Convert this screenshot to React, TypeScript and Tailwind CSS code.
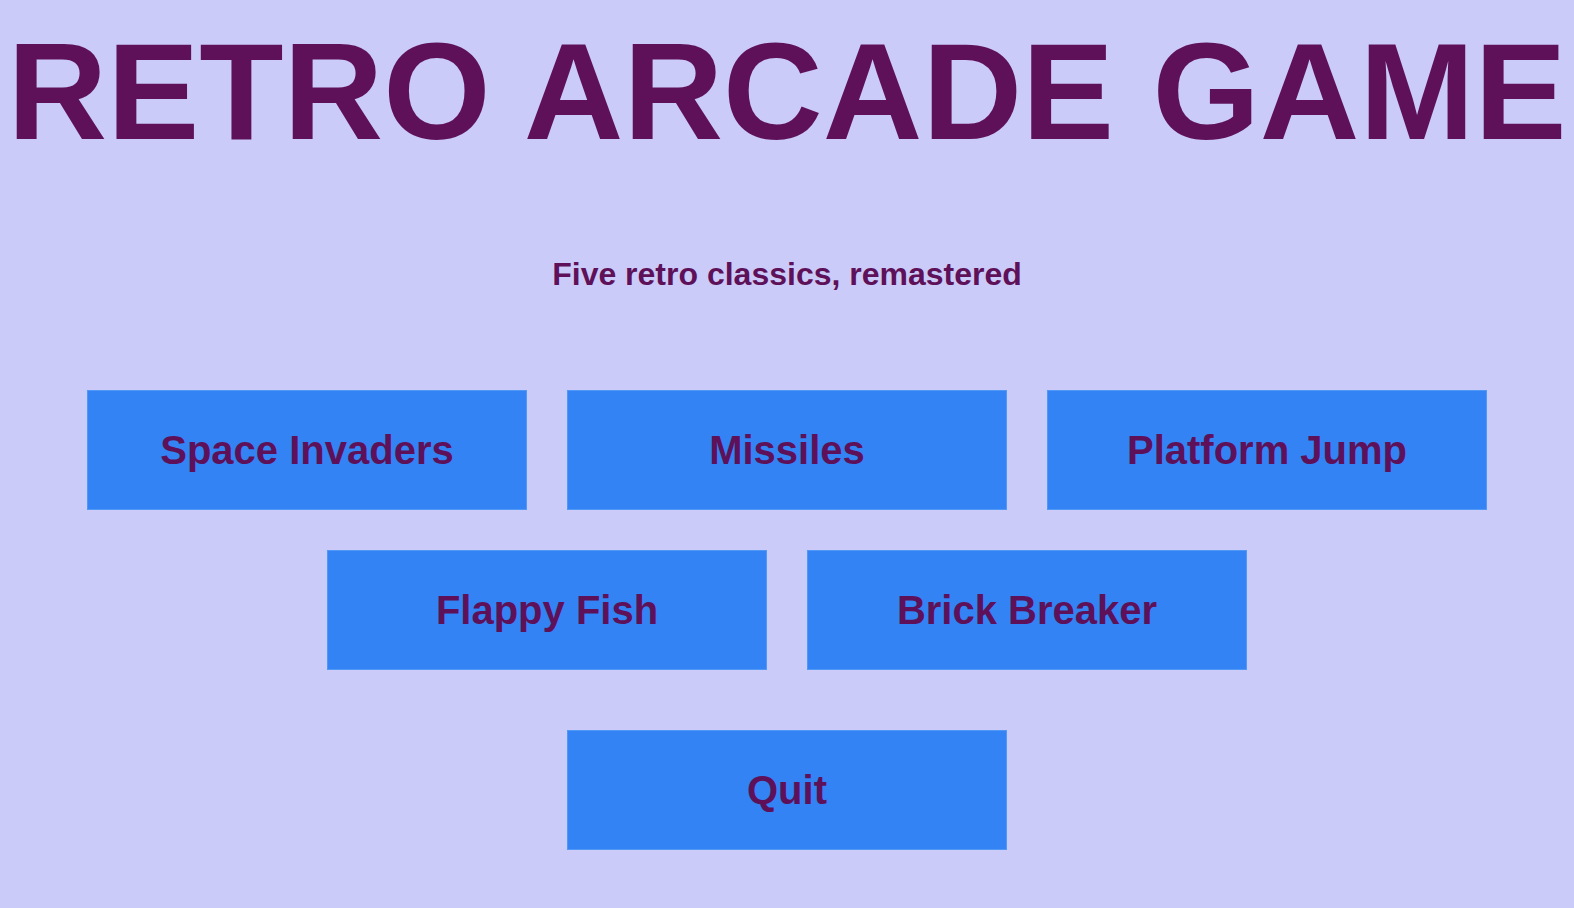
const games = [["Space Invaders", "Missiles", "Platform Jump"], ["Flappy Fish", "Brick Breaker"], ["Quit"]];

function MenuButton({ label }: { label: string }) {
  return (
    <button className="w-[440px] h-[120px] bg-[#3383f5] border border-[#5197f4] flex items-center justify-center text-[40px] font-bold text-[#5e1159]">
      {label}
    </button>
  );
}

export default function App() {
  return (
    <div
      className="w-full min-h-[908px] bg-[#cbcbf9] text-[#5e1159] flex flex-col items-center"
      style={{ fontFamily: '"Liberation Sans", Arial, sans-serif' }}
    >
      <h1 className="mt-[22px] text-[138px] leading-none font-bold whitespace-nowrap">RETRO ARCADE GAME</h1>
      <p className="mt-[98px] text-[32px] leading-none font-bold">Five retro classics, remastered</p>
      <div className="mt-[100px] flex flex-col items-center">
        <div className="flex gap-10">
          {games[0].map((g) => (
            <MenuButton key={g} label={g} />
          ))}
        </div>
        <div className="flex gap-10 mt-10">
          {games[1].map((g) => (
            <MenuButton key={g} label={g} />
          ))}
        </div>
        <div className="flex mt-[60px]">
          <MenuButton label="Quit" />
        </div>
      </div>
    </div>
  );
}
